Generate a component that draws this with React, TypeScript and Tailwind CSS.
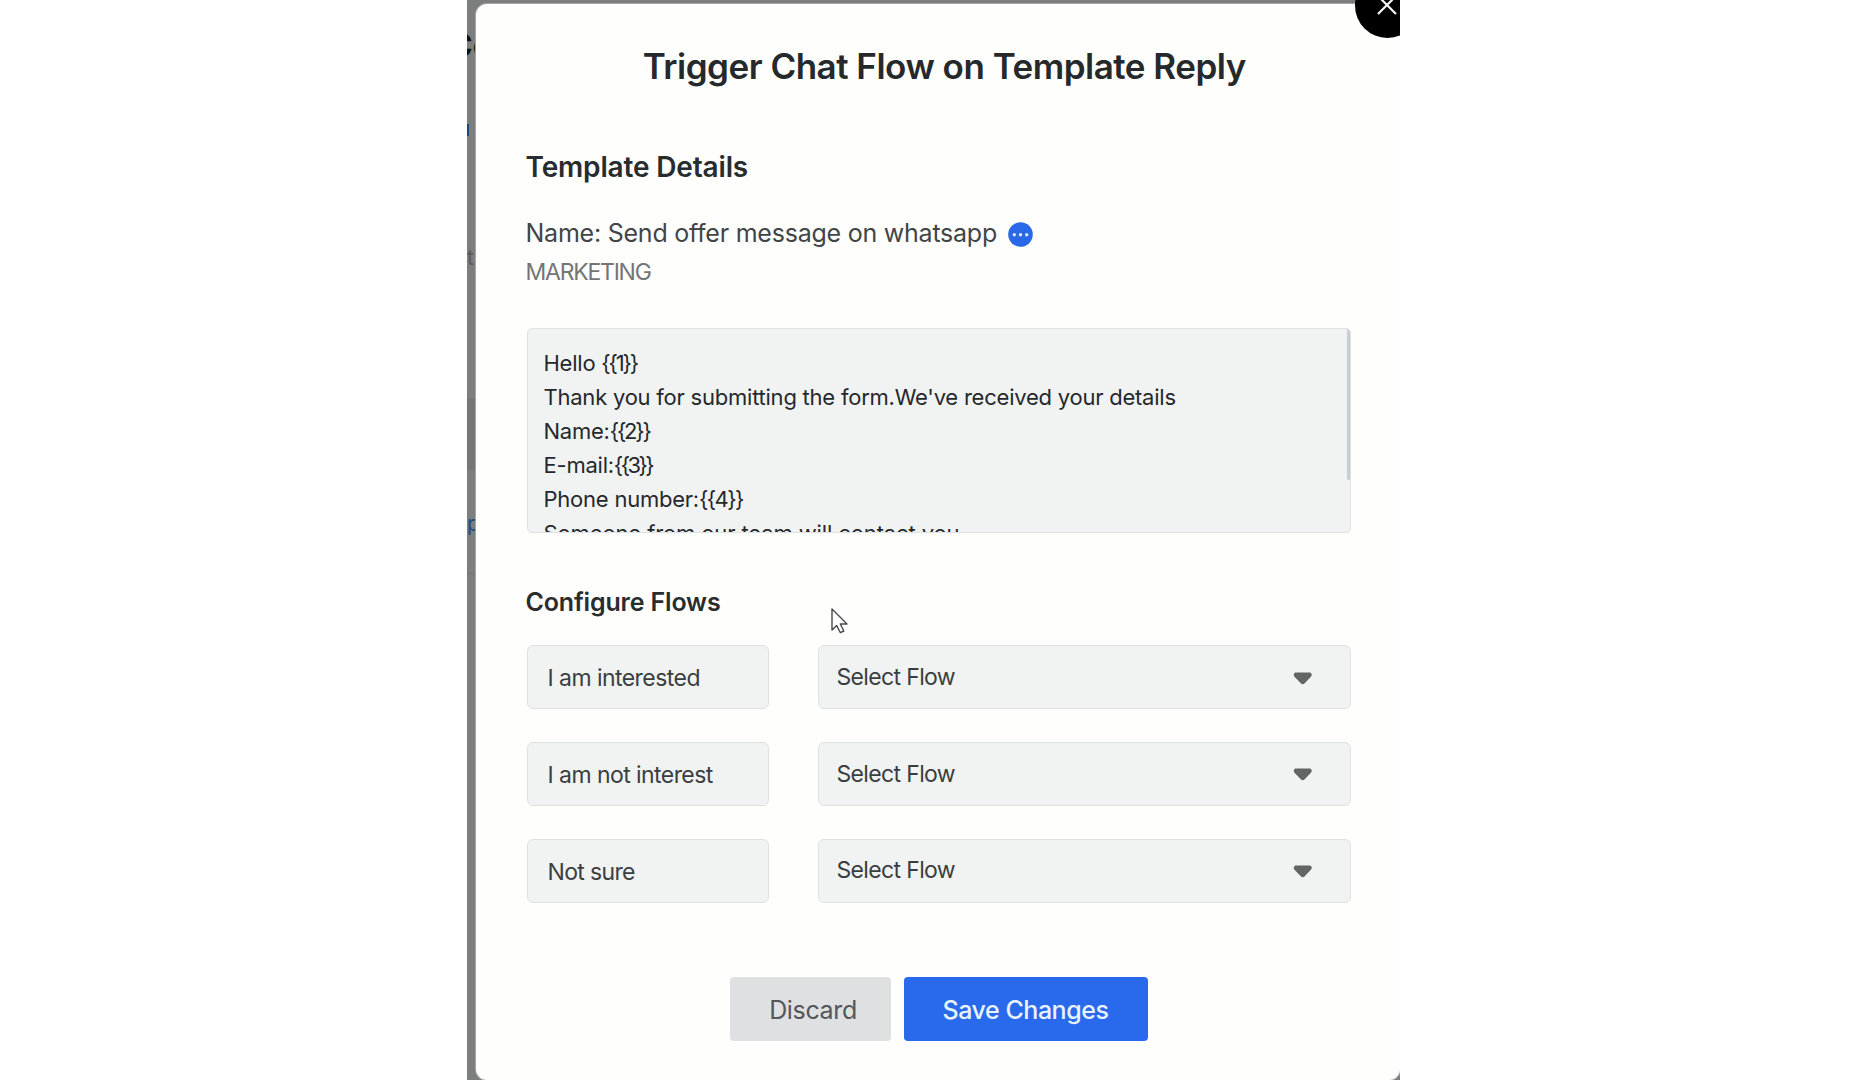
const flows = [
  { label: "I am interested", tracking: "tracking-[-0.55px]" },
  { label: "I am not interest", tracking: "tracking-[-0.56px]" },
  { label: "Not sure", tracking: "tracking-[-0.65px]" },
];

const messageLines = [
  { text: "Hello ", token: "{{1}}", tokenTracking: "tracking-[-2.2px]" },
  { text: "Thank you for submitting the form.We've received your details", token: "", tokenTracking: "" },
  { text: "Name:", token: "{{2}}", tokenTracking: "tracking-[-2.2px]" },
  { text: "E-mail:", token: "{{3}}", tokenTracking: "tracking-[-2.6px]" },
  { text: "Phone number:", token: "{{4}}", tokenTracking: "tracking-[-1.6px]" },
  { text: "Someone from our team will contact you", token: "", tokenTracking: "tracking-normal" },
];

function Backdrop() {
  return (
    <div className="absolute left-0 top-0 h-full w-[9px] overflow-hidden bg-[#7d7e7e]">
      <div className="absolute left-0 top-[398px] h-[72px] w-full bg-[#757676]" />
      <div className="absolute left-0 top-[573px] h-px w-full bg-[#747575]" />
      <span className="absolute left-[-18px] top-[24px] text-[32px] font-bold leading-[44px] text-[#111112]">Cc</span>
      <span className="absolute left-0 top-[124px] h-[12px] w-[2px] bg-[#164b7c]" />
      <span className="absolute left-0 top-[246px] text-[21px] leading-[24px] text-[#55595e]">t</span>
      <span className="absolute left-0 top-[512px] text-[21px] leading-[24px] text-[#234b85]">p</span>
    </div>
  );
}

function CloseButton() {
  return (
    <button className="absolute left-[888px] top-[-27.500px] flex size-[65px] items-center justify-center rounded-full bg-black pr-[2px]">
      <svg width="20" height="20" viewBox="0 0 20 20" fill="none" stroke="#f4f4f4" strokeWidth="2.2">
        <path d="M1 1 19 19M19 1 1 19" />
      </svg>
    </button>
  );
}

function Caret() {
  return (
    <svg width="20" height="13" viewBox="0 0 20 13" fill="#636565">
      <path d="M3 .5h13.500c2.200 0 3 2.700 1.400 4.200l-6.400 6.800c-1 1.100-2.500 1.100-3.500 0L1.500 4.700C0 3.100.9.500 3 .5z" />
    </svg>
  );
}

export default function App() {
  return (
    <div className="h-[1080px] w-[1866px] overflow-hidden bg-white font-['Inter',sans-serif]">
      <div className="relative ml-[467px] h-full w-[933px] overflow-hidden bg-[#7d7e7e] pl-[9px] pt-1">
        <Backdrop />
        <main className="relative flex h-[1076px] flex-col rounded-[11px] bg-[#fefefd] pl-[50.500px] pr-[49px] shadow-[0_0_0_1px_#a5a6a6]">
          <h1 className="mt-[38px] h-12 self-center whitespace-nowrap pl-[11px] text-[35px] font-semibold leading-[48px] tracking-[-0.5px] text-[#26292b]">
            Trigger Chat Flow on Template Reply
          </h1>
          <h2 className="mt-[57px] -ml-px text-[28px] font-semibold leading-[40px] tracking-[-0.16px] text-[#292c2e]">
            Template Details
          </h2>
          <div className="mt-[26px] -ml-px flex h-10 items-center text-[25px] leading-[40px] tracking-[-0.23px] text-[#424547]">
            <span className="w-[482px] whitespace-nowrap">Name: Send offer message on whatsapp</span>
            <svg className="mt-[3px]" width="25" height="25" viewBox="0 0 25 25">
              <circle cx="12.5" cy="12.500" r="12.300" fill="#2968e6" />
              <g fill="#dcebff">
                <circle cx="6.300" cy="12.800" r="1.700" />
                <circle cx="12.500" cy="12.800" r="1.700" />
                <circle cx="18.700" cy="12.800" r="1.700" />
              </g>
            </svg>
          </div>
          <p className="mt-1 -ml-px text-[23px] leading-[30px] tracking-[-1.24px] text-[#737577]">MARKETING</p>

          <div className="relative mt-[41px] h-[205px] overflow-hidden rounded-[5px] border border-[#dfe2e2] bg-[#f1f3f3] pl-4 pt-[18px] text-[22px] leading-[33.9px] tracking-[-0.23px] text-[#25282c]">
            {messageLines.map((line) => (
              <p key={line.text} className="whitespace-nowrap">
                <span className={line.text.startsWith("Someone") ? "tracking-[-0.12px]" : "whitespace-pre"}>
                  {line.text}
                </span>
                <span className={line.tokenTracking}>{line.token}</span>
              </p>
            ))}
            <div className="absolute right-0 top-0 h-[151px] w-[3px] rounded-b-sm bg-[#c8ccd3]" />
          </div>

          <h3 className="mt-[51px] -ml-px text-[25px] font-semibold leading-[36px] tracking-[-0.17px] text-[#2a2d2f]">
            Configure Flows
          </h3>
          <div className="mt-[25px] flex flex-col gap-[32.500px]">
            {flows.map((flow) => (
              <div key={flow.label} className="flex h-[64.300px] justify-between text-[23px] text-[#3b3e40]">
                <div className="flex w-[242px] items-center rounded-[6px] border border-[#e0e2e2] bg-[#f1f3f3] pl-[20px] pt-[3px]">
                  <span className={flow.tracking}>{flow.label}</span>
                </div>
                <div className="flex w-[533.500px] items-center justify-between rounded-[6px] border border-[#e0e2e2] bg-[#f1f3f3] pl-[18px] pr-[37px]">
                  <span className="tracking-[-0.65px]">Select Flow</span>
                  <span className="mt-[2px]">
                    <Caret />
                  </span>
                </div>
              </div>
            ))}
          </div>

          <div className="ml-[203.500px] mt-[74px] flex gap-[13px] text-[25px]">
            <button className="h-16 w-[161px] rounded-[4px] bg-[#dfe0e2] pl-[5px] pt-[3px] tracking-[-0.35px] text-[#53565a]">
              Discard
            </button>
            <button className="h-16 w-[244px] rounded-[4px] bg-[#2969ec] pr-px pt-[3px] font-medium tracking-[-0.47px] text-[#e8f3ff]">
              Save Changes
            </button>
          </div>
        </main>
        <CloseButton />
        <svg className="absolute left-[364px] top-[607px]" width="19" height="28" viewBox="0 0 19 28">
          <path
            d="M1 2v21l4.700-4.400 3.700 7.100 3.400-1.700-3.500-7H16z"
            fill="#fff"
            stroke="#48494b"
            strokeWidth="1.400"
            strokeLinejoin="round"
          />
        </svg>
      </div>
    </div>
  );
}
